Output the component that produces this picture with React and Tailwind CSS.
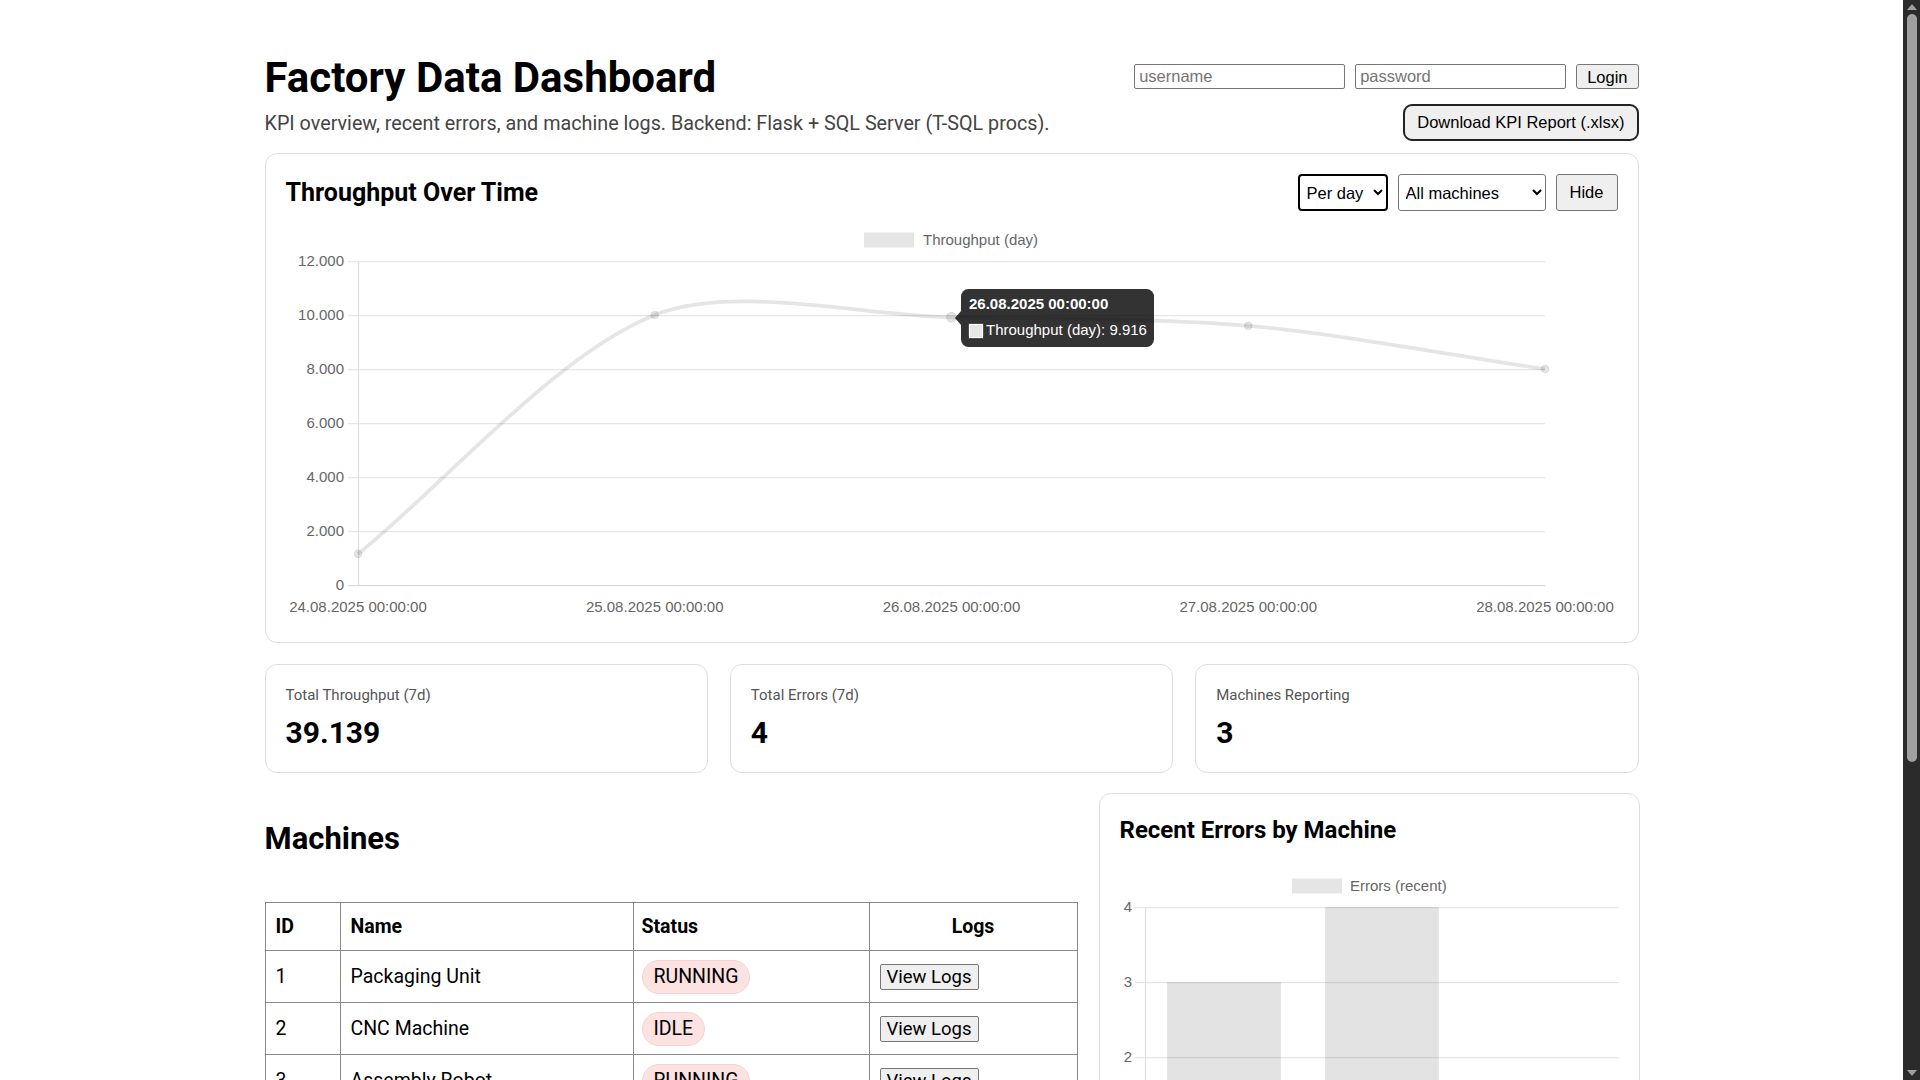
import React from 'react';

const font = { fontFamily: 'Roboto, "Open Sans", sans-serif' };

const throughput = [
  { label: '24.08.2025 00:00:00', value: 1150 },
  { label: '25.08.2025 00:00:00', value: 10000 },
  { label: '26.08.2025 00:00:00', value: 9916 },
  { label: '27.08.2025 00:00:00', value: 9600 },
  { label: '28.08.2025 00:00:00', value: 8000 },
];

const machines = [
  { id: 1, name: 'Packaging Unit', status: 'RUNNING', errors: 3 },
  { id: 2, name: 'CNC Machine', status: 'IDLE', errors: 4 },
  { id: 3, name: 'Assembly Robot', status: 'RUNNING', errors: 1 },
];

// chart.js style spline
function splinePath(pts, t = 0.3) {
  const cps = pts.map((p, i) => {
    const prev = pts[i - 1] || p;
    const next = pts[i + 1] || p;
    const d01 = Math.hypot(p.x - prev.x, p.y - prev.y);
    const d12 = Math.hypot(next.x - p.x, next.y - p.y);
    let s01 = d01 / (d01 + d12);
    let s12 = d12 / (d01 + d12);
    s01 = isNaN(s01) ? 0 : s01;
    s12 = isNaN(s12) ? 0 : s12;
    const fa = t * s01;
    const fb = t * s12;
    return {
      c1: { x: p.x - fa * (next.x - prev.x), y: p.y - fa * (next.y - prev.y) },
      c2: { x: p.x + fb * (next.x - prev.x), y: p.y + fb * (next.y - prev.y) },
    };
  });
  let d = `M${pts[0].x},${pts[0].y}`;
  for (let i = 1; i < pts.length; i++) {
    d += ` C${cps[i - 1].c2.x},${cps[i - 1].c2.y} ${cps[i].c1.x},${cps[i].c1.y} ${pts[i].x},${pts[i].y}`;
  }
  return d;
}

const axisFont = { fontFamily: '"Liberation Sans", Arial, sans-serif' };

const ThroughputChart = () => {
  const left = 72;
  const right = 1259;
  const top = 43;
  const bottom = 367;
  const step = (right - left) / (throughput.length - 1);
  const yFor = (v) => bottom - (v / 12000) * (bottom - top);
  const pts = throughput.map((d, i) => ({ x: left + i * step, y: yFor(d.value) }));
  const ticks = [0, 2000, 4000, 6000, 8000, 10000, 12000];

  return (
    <svg width="1332" height="404" className="block mt-[7px]" style={axisFont}>
      <rect x="578" y="14.5" width="50" height="15" fill="#e5e5e5" />
      <text x="637" y="27" fontSize="15" fill="#666">Throughput (day)</text>
      {ticks.map((t) => (
        <g key={t}>
          <line x1={left - 10} x2={right} y1={yFor(t) + 0.5} y2={yFor(t) + 0.5} stroke={t === 0 ? '#d9d9d9' : '#e6e6e6'} strokeWidth="1.25" />
          <text x="58" y={yFor(t) + 5} fontSize="15" fill="#666" textAnchor="end">
            {t.toLocaleString('de-DE')}
          </text>
        </g>
      ))}
      <line x1={left + 0.5} x2={left + 0.5} y1={top} y2={bottom} stroke="#e0e0e0" strokeWidth="1.25" />
      {throughput.map((d, i) => (
        <text key={d.label} x={left + i * step} y="394" fontSize="15" fill="#666" textAnchor="middle">
          {d.label}
        </text>
      ))}
      <path d={splinePath(pts)} fill="none" stroke="rgba(0,0,0,0.1)" strokeWidth="3.75" />
      {pts.map((p, i) => (
        <circle key={i} cx={p.x} cy={p.y} r={i === 2 ? 5 : 3.75} fill="rgba(0,0,0,0.1)" stroke="rgba(0,0,0,0.08)" strokeWidth="1.25" />
      ))}
      <g>
        <rect x="675" y="71" width="193" height="58" rx="7.5" fill="rgba(0,0,0,0.8)" />
        <polygon points="675,93 669,100 675,107" fill="rgba(0,0,0,0.8)" />
        <text x="683" y="91" fontSize="15" fontWeight="bold" fill="#fff">26.08.2025 00:00:00</text>
        <rect x="683.5" y="106.5" width="13" height="13" fill="#e6e6e6" stroke="#fff" strokeWidth="1.25" />
        <text x="700" y="117" fontSize="15" fill="#fff">Throughput (day): 9.916</text>
      </g>
    </svg>
  );
};

const ErrorsChart = () => {
  const left = 25;
  const right = 499;
  const zero = 361;
  const unit = 75;
  const band = (right - left) / machines.length;

  return (
    <svg width="499" height="400" className="block" style={axisFont}>
      <rect x="172" y="32.5" width="50" height="15" fill="#e5e5e5" />
      <text x="230" y="45" fontSize="15" fill="#666">Errors (recent)</text>
      {[0, 1, 2, 3, 4].map((t) => (
        <g key={t}>
          <line x1={left - 10} x2={right} y1={zero - t * unit + 0.5} y2={zero - t * unit + 0.5} stroke="#e6e6e6" strokeWidth="1.25" />
          <text x="12" y={zero - t * unit + 5} fontSize="15" fill="#666" textAnchor="end">{t}</text>
        </g>
      ))}
      <line x1={left + 0.5} x2={left + 0.5} y1={zero - 4 * unit} y2={zero} stroke="#e0e0e0" strokeWidth="1.25" />
      {machines.map((m, i) => {
        const w = band * 0.72;
        const cx = left + band * i + band / 2;
        return (
          <g key={m.id}>
            <rect x={cx - w / 2} y={zero - m.errors * unit} width={w} height={m.errors * unit} fill="rgba(0,0,0,0.11)" />
            <text x={cx} y={zero + 27} fontSize="15" fill="#666" textAnchor="middle">{m.name}</text>
          </g>
        );
      })}
    </svg>
  );
};

const StatCard = ({ label, value }) => (
  <div className="border border-[#dddddd] rounded-[12px] px-[20px] pt-[20px] pb-[21px]">
    <div className="text-[15px] leading-[20px] text-[#555]">{label}</div>
    <div className="mt-[10px] text-[30px] leading-[36px] font-bold text-black">{value}</div>
  </div>
);

// the browser's scrollbar, as it shows in the screenshot
const Scrollbar = () => (
  <aside className="sticky top-0 w-[17px] h-[1080px] shrink-0 bg-[#2b2b2b] flex flex-col items-center">
    <svg width="10" height="6" className="mt-[4px]">
      <polygon points="0,6 5,0 10,6" fill="#9f9f9f" />
    </svg>
    <div className="mt-[4px] w-[10px] h-[748px] rounded-full bg-[#9f9f9f]" />
    <div className="flex-1" />
    <svg width="10" height="6" className="mb-[4px]">
      <polygon points="0,0 10,0 5,6" fill="#9f9f9f" />
    </svg>
  </aside>
);

const ctrl = 'font-["Liberation_Sans",Arial,sans-serif] text-[16.5px] text-black';

export default function App() {
  return (
    <div className="flex items-start bg-white" style={font}>
      <main className="flex-1 min-w-0">
        <div className="w-[1374px] mx-auto pt-[54px] pb-[90px] text-black">
          <header className="flex justify-between items-start">
            <div>
              <h1 className="text-[42px] leading-[48px] font-bold">Factory Data Dashboard</h1>
              <p className="mt-[8px] text-[19.75px] leading-[27px] text-[#444]">
                KPI overview, recent errors, and machine logs. Backend: Flask + SQL Server (T-SQL procs).
              </p>
            </div>
            <div className="mt-[10px] flex flex-col items-end gap-[15px]">
              <div className="flex items-center gap-[10px]">
                <input
                  placeholder="username"
                  className={`${ctrl} w-[211px] h-[25px] px-[4px] border border-[#767676] rounded-[2px] placeholder:text-[#757575]`}
                />
                <input
                  type="password"
                  placeholder="password"
                  className={`${ctrl} w-[211px] h-[25px] px-[4px] border border-[#767676] rounded-[2px] placeholder:text-[#757575]`}
                />
                <button className={`${ctrl} h-[25px] px-[10px] bg-[#efefef] border border-[#767676] rounded-[3px]`}>
                  Login
                </button>
              </div>
              <button className={`${ctrl} h-[37px] px-[12px] bg-[#efefef] border-2 border-[#222] rounded-[9px]`}>
                Download KPI Report (.xlsx)
              </button>
            </div>
          </header>

          <section className="mt-[12px] border border-[#dddddd] rounded-[12px] px-[20px] pt-[20px] pb-[20px]">
            <div className="flex items-center justify-between">
              <h3 className="text-[25px] leading-[32px] font-bold">Throughput Over Time</h3>
              <div className="flex items-center gap-[10px]">
                <select className={`${ctrl} w-[90px] h-[37px] pl-[3px] border-2 border-black rounded-[4px] bg-white`}>
                  <option>Per day</option>
                  <option>Per hour</option>
                </select>
                <select className={`${ctrl} w-[148px] h-[37px] pl-[3px] border border-[#767676] rounded-[3px] bg-white`}>
                  <option>All machines</option>
                  <option>Packaging Unit</option>
                  <option>CNC Machine</option>
                  <option>Assembly Robot</option>
                </select>
                <button className={`${ctrl} w-[62px] h-[37px] bg-[#efefef] border border-[#767676] rounded-[3px]`}>
                  Hide
                </button>
              </div>
            </div>
            <ThroughputChart />
          </section>

          <div className="mt-[21px] grid grid-cols-3 gap-[22px]">
            <StatCard label="Total Throughput (7d)" value="39.139" />
            <StatCard label="Total Errors (7d)" value="4" />
            <StatCard label="Machines Reporting" value="3" />
          </div>

          <div className="mt-[20px] grid grid-cols-[813px_1fr] gap-[21px] items-start">
            <div>
              <h2 className="mt-[29px] text-[31px] leading-[34px] font-bold">Machines</h2>
              <table className="mt-[46px] w-[813px] border-collapse text-[19.5px]">
                <thead>
                  <tr className="h-[48px]">
                    <th className="w-[75px] border border-[#888] px-[10px] text-left font-bold">ID</th>
                    <th className="w-[293px] border border-[#888] px-[10px] text-left font-bold">Name</th>
                    <th className="w-[236px] border border-[#888] px-[8px] text-left font-bold">Status</th>
                    <th className="w-[208px] border border-[#888] px-[10px] text-center font-bold">Logs</th>
                  </tr>
                </thead>
                <tbody>
                  {machines.map((m) => (
                    <tr key={m.id} className="h-[52px]">
                      <td className="border border-[#888] px-[10px]">{m.id}</td>
                      <td className="border border-[#888] px-[10px]">{m.name}</td>
                      <td className="border border-[#888] px-[8px]">
                        <span className="inline-flex items-center h-[34px] px-[11px] rounded-full bg-[#fde2e2] border border-[#f6d2d2]">
                          {m.status}
                        </span>
                      </td>
                      <td className="border border-[#888] px-[10px]">
                        <button className="h-[26px] px-[6px] text-[18.5px] leading-[22px] bg-[#efefef] border border-[#767676] rounded-[2px]">
                          View Logs
                        </button>
                      </td>
                    </tr>
                  ))}
                </tbody>
              </table>
            </div>

            <section className="border border-[#dddddd] rounded-[12px] px-[20px] pt-[20px] pb-[20px]">
              <h3 className="text-[24px] leading-[32px] font-bold">Recent Errors by Machine</h3>
              <ErrorsChart />
            </section>
          </div>

          <section className="mt-[22px] border border-[#dddddd] rounded-[12px] px-[20px] py-[20px]">
            <h3 className="text-[24px] leading-[32px] font-bold">Machine Logs</h3>
            <p className="mt-[8px] text-[17px] text-[#555]">Select a machine to view its logs.</p>
          </section>
        </div>
      </main>
      <Scrollbar />
    </div>
  );
}
